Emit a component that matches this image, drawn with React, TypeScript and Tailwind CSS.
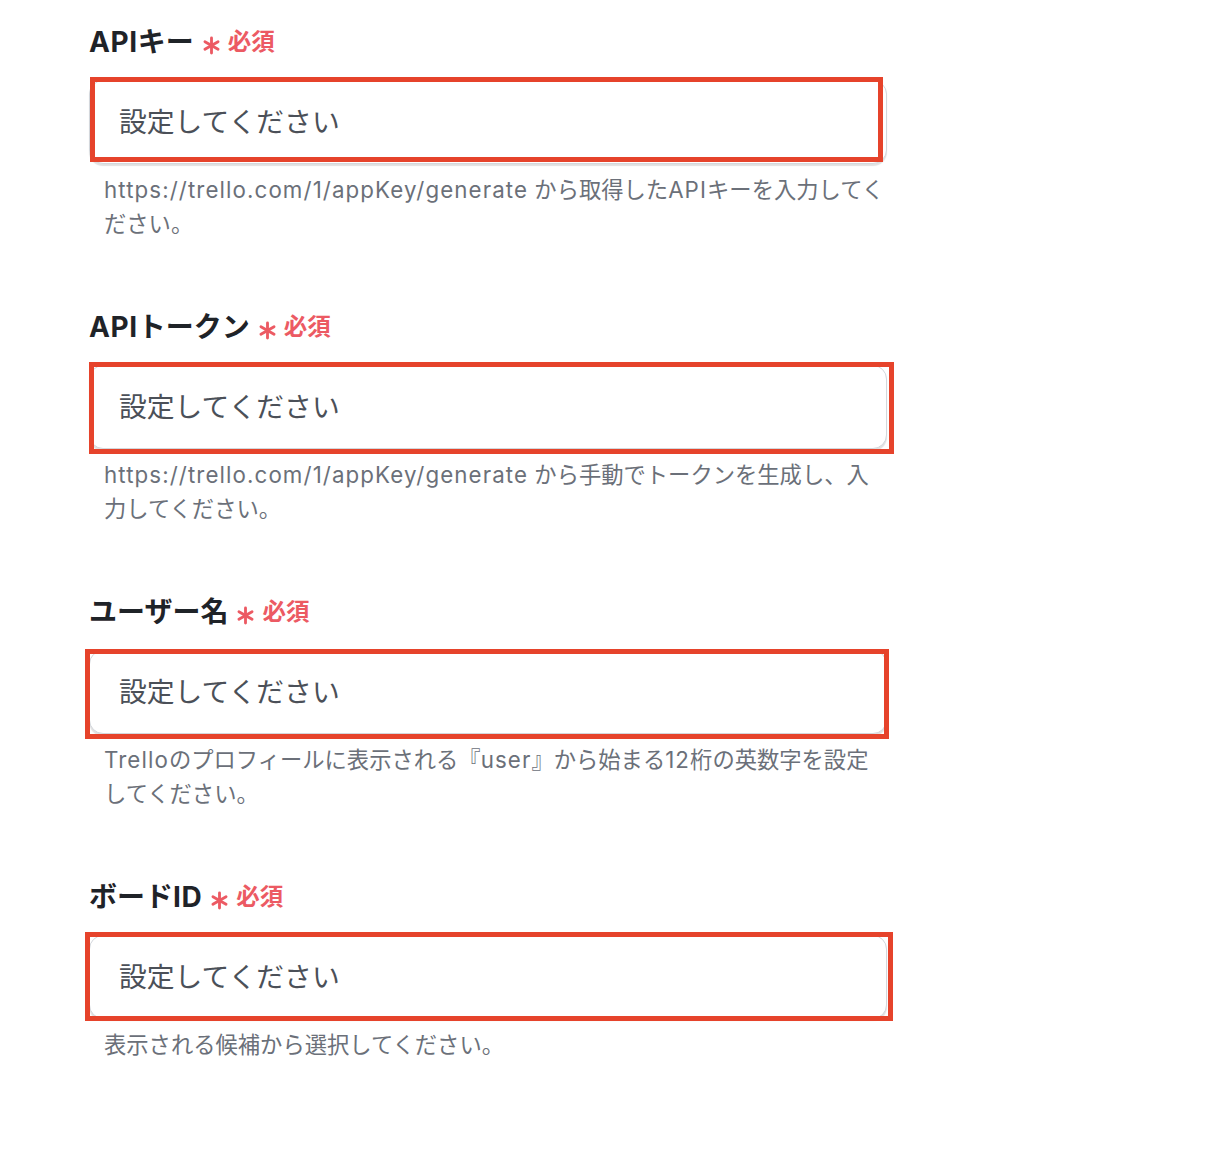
const FONT = 'Inter, "Noto Sans CJK JP", sans-serif'

type Field = {
  label: string
  help: string[]
  mark: string
}

const fields: Field[] = [
  {
    label: 'APIキー',
    help: ['https://trello.com/1/appKey/generate から取得したAPIキーを入力してく', 'ださい。'],
    mark: 'left-[1px] -top-[3px] right-[4px] bottom-[2px]',
  },
  {
    label: 'APIトークン',
    help: ['https://trello.com/1/appKey/generate から手動でトークンを生成し、入', '力してください。'],
    mark: 'left-0 -top-[3px] -right-[7px] -bottom-[5px]',
  },
  {
    label: 'ユーザー名',
    help: ['Trelloのプロフィールに表示される『user』から始まる12桁の英数字を設定', 'してください。'],
    mark: '-left-[4px] -top-[1px] -right-[2px] -bottom-[5px]',
  },
  {
    label: 'ボードID',
    help: ['表示される候補から選択してください。'],
    mark: '-left-[4px] -top-[3px] -right-[6px] -bottom-[2px]',
  },
]

// latin runs are set a little wider, like the original system font
function Latinish({ text, wide }: { text: string; wide: string }) {
  return (
    <>
      {text.split(/([A-Za-z0-9:/.]+)/).map((part, i) =>
        i % 2 === 1 ? (
          <span key={i} className={wide}>
            {part}
          </span>
        ) : (
          part
        ),
      )}
    </>
  )
}

function Asterisk() {
  return (
    <svg viewBox="0 0 20 20" className="mt-[6px] h-[19px] w-[19px]" fill="none" stroke="#ec5a63" strokeWidth="3" strokeLinecap="round">
      <path d="M10 2v16" />
      <path d="M3.1 6l13.8 8" />
      <path d="M3.1 14l13.8-8" />
    </svg>
  )
}

function FormField({ field }: { field: Field }) {
  return (
    <div className="mb-[72px]">
      <div className="flex h-[28px] items-center">
        <span className="text-[28px] font-bold text-[#1f2328]">
          <Latinish text={field.label} wide="tracking-[0.6px]" />
        </span>
        <span className="ml-[8px]">
          <Asterisk />
        </span>
        <span className="ml-[7px] text-[23.5px] font-bold text-[#ec5a63]">必須</span>
      </div>
      <div className="relative mt-[24px] w-[798px]">
        <div className="flex h-[84px] items-center rounded-[14px] border border-[#d3d7dc] bg-white pl-[29px] pt-[2px] shadow-[0_2px_1px_rgba(0,0,0,0.12)]">
          <span className="text-[27.8px] text-[#4b5058]">設定してください</span>
        </div>
        <div className={`pointer-events-none absolute border-[5px] border-[#e6432b] ${field.mark}`} />
      </div>
      <div className="mt-[9px] pl-[15px] text-[22.3px] leading-[34px] text-[#6b7079]">
        {field.help.map((line) => (
          <div key={line} className="whitespace-nowrap">
            <Latinish text={line} wide="tracking-[1.1px]" />
          </div>
        ))}
      </div>
    </div>
  )
}

export default function App() {
  return (
    <div className="min-h-[1156px] w-[1230px] bg-white pl-[89px] pt-[28px]" style={{ fontFamily: FONT }}>
      {fields.map((f) => (
        <FormField key={f.label} field={f} />
      ))}
    </div>
  )
}
